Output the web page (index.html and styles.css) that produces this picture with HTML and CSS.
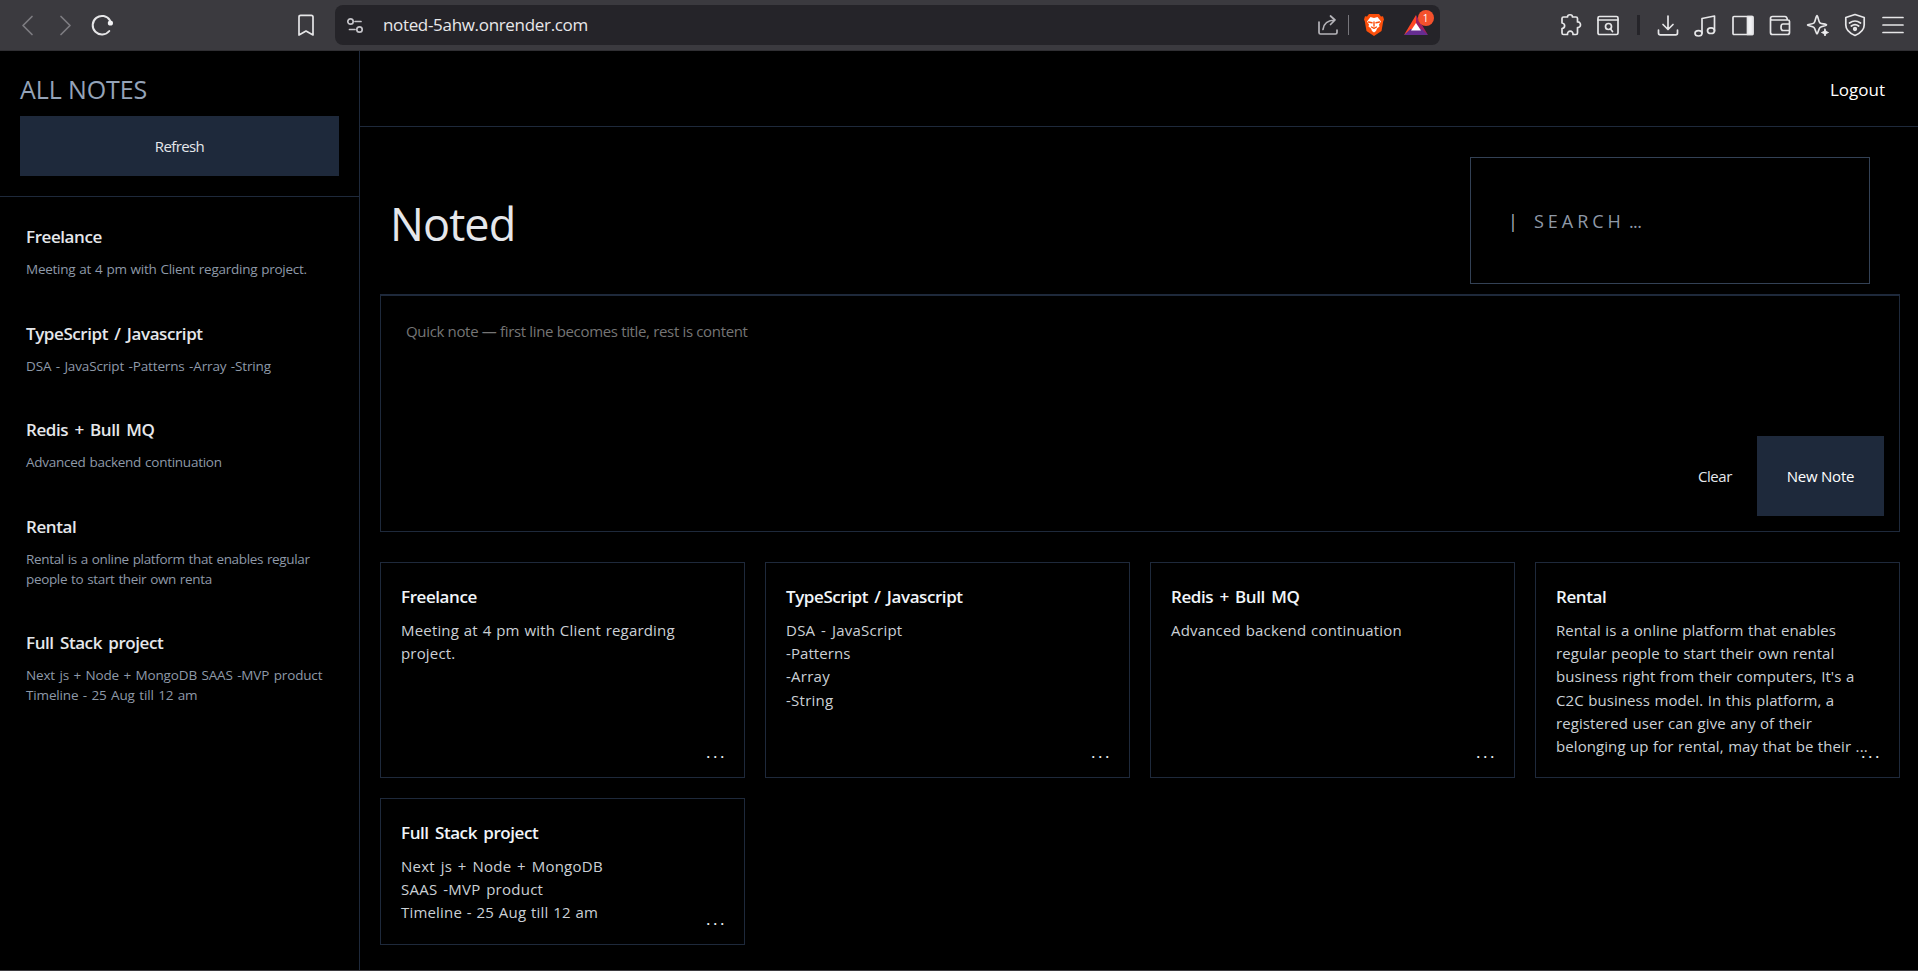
FILE: index.html
```html
<!DOCTYPE html>
<html lang="en">
<head>
<meta charset="utf-8">
<title>Noted</title>
<link rel="stylesheet" href="styles.css">
</head>
<body>
<div class="browser">
  <div class="nav">
    <svg class="dim" width="14" height="22" viewBox="0 0 14 22"><path d="M12 2.500 3 11.500l9 9"/></svg>
    <svg class="dim fwd" width="14" height="22" viewBox="0 0 14 22"><path d="m3 2.500 9 9-9 9"/></svg>
    <svg class="reload" width="24" height="24" viewBox="0 0 24 24"><path d="M19.300 18A9.300 9.300 0 1 1 20 7.500" stroke-width="2"/><circle cx="20.400" cy="10" r="2.600" fill="#f2f2f4" stroke="none"/></svg>
    <svg class="mark" width="16" height="24" viewBox="0 0 16 24"><path d="M1 4Q1 2.300 2.700 2.300h10.600Q15 2.300 15 4V22L8 18 1 22Z"/></svg>
  </div>
  <div class="address">
    <svg class="tune" width="18" height="18" viewBox="0 0 18 18"><circle cx="4.500" cy="4.500" r="2.700"/><path d="M9 4.500h6M3.500 12.500h5.500"/><circle cx="13.500" cy="12.500" r="2.700"/></svg>
    <span class="url">noted-5ahw.onrender.com</span>
    <svg class="share" width="22" height="22" viewBox="0 0 22 22"><path d="M2 8v10.500q0 1.500 1.500 1.500h15q1.500 0 1.500-1.500V16M6 15.500C6.500 10 10 6.500 17.500 6M13.500 2l4.500 4-4.500 4.500"/></svg>
    <i class="bar"></i>
    <svg class="lion" width="20" height="24" viewBox="0 0 20 24"><path d="M5 1h10l2 2.500 2-.3 1 3.300-.8 2L17.500 18 10 23 2.500 18 .8 8.500 0 6.500l1-3.300 2 .3Z" fill="#fb4f0b" stroke="none"/><path d="m10 5 3.500-1 3.500 4.500-2 3 .5 2-2.500 2-1 2.500L10 19.500l-2-1.500-1-2.500-2.500-2 .5-2-2-3L6.500 4Z" fill="#fff" stroke="none"/><path d="m4.500 9 3.500.8M15.500 9l-3.500.8M10 9v4M7.500 14l2.500 1.300 2.500-1.300" stroke="#fb4f0b" stroke-width="1.400"/></svg>
    <div class="rewards">
      <svg width="24" height="20" viewBox="0 0 24 20"><path d="M12 0 0 20 12 13Z" fill="#ff4724" stroke="none"/><path d="m12 0 12 20-12-7Z" fill="#9e1f63" stroke="none"/><path d="M0 20h24l-6.500-6h-11Z" fill="#662d91" stroke="none"/><path d="m12 8 5 7.500H7Z" fill="#fff" stroke="none"/></svg>
      <b class="badge">1</b>
    </div>
  </div>
  <div class="tools">
    <svg width="24" height="24" viewBox="0 0 24 24"><path d="M3 5.500q0-1.500 1.500-1.500H8.500C8.500 1 13.500 1 13.500 4H17q1.500 0 1.500 1.500V9c4-.5 4 6 0 5.500V20q0 1.500-1.500 1.500h-3c.5-4.500-6-4.500-5.500 0h-4Q3 21.500 3 20v-4.500c3.500-.5 3.500-5 0-5.500Z"/></svg>
    <svg width="24" height="24" viewBox="0 0 24 24"><rect x="2" y="3.500" width="20" height="18" rx="1.500"/><path d="M2 7h20M14.500 16l2 2.500"/><circle cx="12.500" cy="13.500" r="3"/></svg>
    <i class="divider"></i>
    <svg width="24" height="24" viewBox="0 0 24 24"><path d="M12 3v13M7 11.500l5 5 5-5M2.500 17v3q0 1.800 1.800 1.800h15.400q1.800 0 1.800-1.800v-3"/></svg>
    <svg width="24" height="24" viewBox="0 0 24 24"><ellipse cx="5.500" cy="20.300" rx="3.500" ry="2.700"/><ellipse cx="18" cy="17.700" rx="3.500" ry="2.800"/><path d="M9 20V5.500L21.500 3v15"/></svg>
    <svg width="24" height="24" viewBox="0 0 24 24"><rect x="2" y="3.500" width="20" height="18" rx="1"/><path d="M16.500 3.500H21.500v18h-5Z" fill="#f2f2f4"/></svg>
    <svg width="24" height="24" viewBox="0 0 24 24"><path d="M2.500 5.500v14q0 2 2 2h15q2 0 2-2V8.500q0-1.500-1.500-1.500H4Q2.500 7 2.500 5.500q0-2 2-2H17q2 0 2.500 3.500M21.500 11H15q-2 0-2 3.200 0 3.300 2 3.300h6.500Z"/></svg>
    <svg width="24" height="24" viewBox="0 0 24 24"><path d="M11 2.500c1 0 1.500 6.500 3 7.500s6.500 1 6.500 2-5 1-6.500 2.500S12 21 11 21s-1.500-5-3-6.500S1.500 13 1.500 12 6.500 11.500 8 10s2-7.500 3-7.500Z"/><path d="m19 16 1 2.500 2.500 1-2.500 1-1 2.500-1-2.500-2.500-1 2.500-1Z" fill="#f2f2f4" stroke-width="1"/></svg>
    <svg width="24" height="24" viewBox="0 0 24 24"><path d="m12 1.500 9.200 3V12q0 6.500-9.200 10.500Q2.800 18.500 2.800 12V4.500ZM6.500 10q5.500-4 11 0M8.300 13q3.700-2.800 7.400 0"/><circle cx="12" cy="16" r="1.300" fill="#f2f2f4"/></svg>
    <svg width="24" height="24" viewBox="0 0 24 24"><path d="M2 4.500h20M2 12h20M2 19.500h20"/></svg>
  </div>
</div>
<div class="app">
  <aside class="sidebar">
    <div class="side-head">
      <h2 class="side-title">ALL NOTES</h2>
      <button class="refresh">Refresh</button>
    </div>
    <div class="side-list">
      <div class="item"><h3>Freelance</h3><p>Meeting at 4 pm with Client regarding project.</p></div>
      <div class="item"><h3>TypeScript / Javascript</h3><p><span class="wide">DSA - JavaScript -Patterns -Array -String</span></p></div>
      <div class="item"><h3>Redis + Bull MQ</h3><p>Advanced backend continuation</p></div>
      <div class="item"><h3>Rental</h3><p><span class="tight">Rental is a online platform that enables regular<br>people to start their own renta</span></p></div>
      <div class="item"><h3>Full Stack project</h3><p><span class="wide">Next js + Node + MongoDB SAAS -MVP product</span><br><span class="wide">Timeline - 25 Aug till 12 am</span></p></div>
    </div>
  </aside>
  <main class="main">
    <header class="topbar"><a class="logout">Logout</a></header>
    <div class="content">
      <div class="heading">
        <h1>Noted</h1>
        <div class="search"><span class="pipe">|</span><span class="word">SEARCH</span><span class="ell">...</span></div>
      </div>
      <section class="composer">
        <div class="placeholder">Quick note — first line becomes title, rest is content</div>
        <div class="actions"><button class="clear">Clear</button><button class="new">New Note</button></div>
      </section>
      <section class="cards">
        <article class="card"><h3>Freelance</h3><p><span class="loose">Meeting at 4 pm with Client regarding<br>project.</span></p><span class="more">...</span></article>
        <article class="card"><h3>TypeScript / Javascript</h3><p><span class="wide">DSA - JavaScript</span><br>-Patterns<br><span class="wide">-Array<br>-String</span></p><span class="more">...</span></article>
        <article class="card"><h3>Redis + Bull MQ</h3><p><span class="loose">Advanced backend continuation</span></p><span class="more">...</span></article>
        <article class="card"><h3>Rental</h3><p>Rental is a online platform that enables<br>regular people to start their own rental<br>business right from their computers, It's a<br>C2C business model. In this platform, a<br>registered user can give any of their<br>belonging up for rental, may that be their ...</p><span class="more">...</span></article>
        <article class="card"><h3>Full Stack project</h3><p><span class="wide">Next js + Node + MongoDB</span><br><span class="wide">SAAS -MVP product</span><br><span class="loose">Timeline - 25 Aug till 12 am</span></p><span class="more">...</span></article>
      </section>
    </div>
  </main>
</div>
</body>
</html>
```
FILE: styles.css
```css
* { box-sizing: border-box; margin: 0; padding: 0; }
body {
  width: 1918px; height: 971px; overflow: hidden;
  display: flex; flex-direction: column;
  background: #000; color: #e5e7eb;
  font-family: "Open Sans", "Noto Sans", sans-serif;
}
button { font: inherit; color: inherit; border: 0; background: none; }
p, .placeholder { white-space: nowrap; }

/* browser toolbar */
.browser { height: 51px; flex: none; display: flex; background: #3b3a3f; border-bottom: 1px solid #302f33; }
.browser svg { flex: none; fill: none; stroke: #e6e6e8; stroke-width: 1.7; stroke-linecap: round; stroke-linejoin: round; }
.nav { width: 335px; display: flex; align-items: center; padding-left: 20px; }
.nav svg.dim { stroke: #7d7c81; }
.nav .fwd { margin-left: 24px; }
.nav .reload { margin-left: 18px; }
.nav .mark { margin-left: 184px; }
.address { width: 1105px; height: 40px; margin-top: 5px; border-radius: 8px; background: #252429; display: flex; align-items: center; padding-left: 11px; }
.url { margin-left: 19px; font-size: 17px; letter-spacing: -0.32px; flex: 1; color: #e8e8ea; padding-bottom: 2px; }
.address .tune { stroke: #c5c4c9; margin-top: 1px; }
.address .share { stroke: #b5b4b9; margin-right: 9px; }
.bar { width: 1px; height: 20px; background: #77767b; margin-right: 15px; }
.rewards { position: relative; width: 24px; height: 20px; margin: 0 12px 0 20px; }
.rewards svg { display: block; }
.badge { position: absolute; left: 14px; top: -5px; width: 16px; height: 16px; border-radius: 50%; background: #f4512c; color: #fff; font-size: 10px; font-weight: 400; line-height: 16px; text-align: center; }
.tools { flex: 1; display: flex; align-items: center; padding-left: 119px; }
.tools svg { margin-right: 13.5px; }
.divider { width: 3px; height: 20px; background: #252429; margin: 0 16px 0 3px; }

/* page shell */
.app { flex: 1; display: flex; border-bottom: 1px solid #3b3a3f; }
.sidebar { width: 360px; flex: none; border-right: 1px solid #1e293b; }
.side-head { height: 146px; padding: 19px 20px 0; border-bottom: 1px solid #1e293b; }
.side-title { font-size: 25px; font-weight: 400; line-height: 38px; height: 46px; letter-spacing: -0.1px; color: #94a3b8; }
.refresh { display: block; width: 319px; height: 60px; background: #1e293b; font-size: 15px; letter-spacing: -0.6px; }
.side-list { padding: 24px 26px; }
.item { margin-bottom: 38.6px; }
.item h3, .card h3 { font-size: 17px; font-weight: 600; letter-spacing: -0.42px; word-spacing: 2.3px; }
.item h3 { line-height: 32px; }
.item p { font-size: 13.5px; line-height: 20px; margin-top: 6px; letter-spacing: -0.26px; word-spacing: 0.7px; color: #8e99a8; }
.item .wide { letter-spacing: -0.15px; word-spacing: 1.1px; }
.item .tight { letter-spacing: -0.34px; }

.main { flex: 1; }
.topbar { height: 76px; border-bottom: 1px solid #1e293b; display: flex; justify-content: flex-end; align-items: center; padding: 2px 33px 0 0; }
.logout { font-size: 17px; color: #fff; }
.content { padding: 30px 18px 0 20px; }
.heading { display: flex; justify-content: space-between; height: 137px; padding: 0 30px 0 10px; }
.heading h1 { font-size: 45px; font-weight: 400; line-height: 66px; margin-top: 34px; letter-spacing: -0.9px; }
.search { width: 400px; height: 127px; border: 1px solid #334155; display: flex; align-items: center; padding-left: 37px; font-size: 18px; color: #8f99a7; }
.pipe { color: #a9b3c0; }
.word { margin-left: 16px; letter-spacing: 4px; }
.ell { margin-left: 4px; letter-spacing: -0.5px; }
.composer { height: 238px; border: 1px solid #1e293b; border-top-width: 2px; display: flex; flex-direction: column; justify-content: space-between; padding: 23px 15px 15px 25px; font-size: 15px; }
.placeholder { color: #757575; line-height: 24px; letter-spacing: -0.34px; }
.actions { display: flex; justify-content: flex-end; align-items: center; }
.clear { margin-right: 25px; letter-spacing: -0.4px; }
.new { width: 127px; height: 80px; background: #1e293b; color: #fff; letter-spacing: -0.25px; }

.cards { display: grid; grid-template-columns: repeat(4, 365px); grid-template-rows: 216px 147px; gap: 20px; margin-top: 30px; }
.card { position: relative; border: 1px solid #1e293b; padding: 20px; }
.card h3 { line-height: 28px; color: #f1f5f9; }
.card p { font-size: 15px; line-height: 23.2px; margin-top: 8px; letter-spacing: 0.08px; word-spacing: 0.5px; color: #cbd0d6; }
.card .wide { letter-spacing: 0.25px; word-spacing: 1.6px; }
.card .loose { letter-spacing: 0.18px; word-spacing: 0.7px; }
.more { position: absolute; right: 17px; bottom: 13px; font-size: 17px; line-height: 24px; letter-spacing: 2.5px; color: #f1f5f9; }
```
